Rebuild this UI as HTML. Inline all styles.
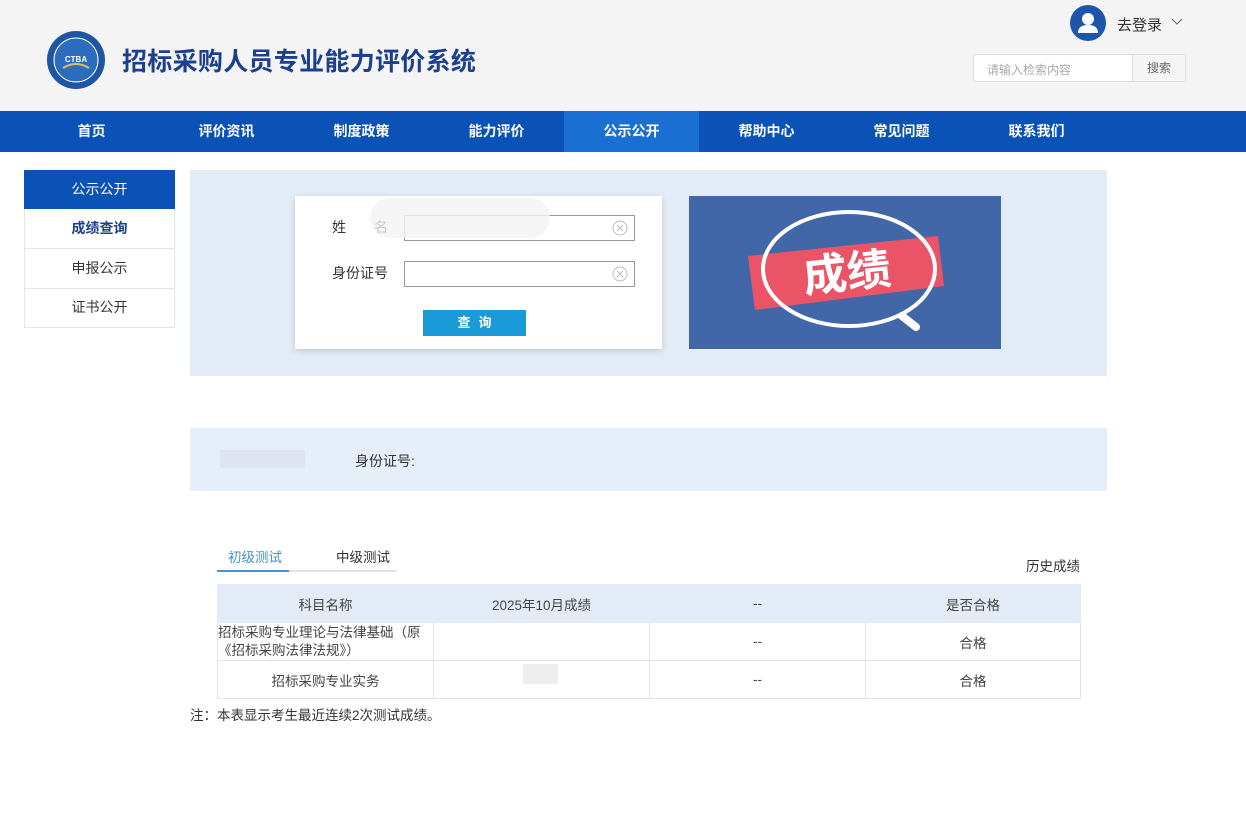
<!DOCTYPE html>
<html><head><meta charset="utf-8"><style>
*{margin:0;padding:0;box-sizing:border-box}
body{width:1246px;height:832px;background:#fff;font-family:"Liberation Sans","Noto Sans CJK SC",sans-serif;font-size:14px;color:#333;position:relative;overflow:hidden}
.abs{position:absolute}
.hdr{left:0;top:0;width:1246px;height:111px;background:#f4f4f5}
.nav{left:0;top:111px;width:1246px;height:41px;background:#0a52b5}
.nav div{position:absolute;top:0;height:41px;line-height:41px;width:135px;text-align:center;color:#fff;font-weight:bold;font-size:14px}
.side div{position:absolute;left:24px;width:151px;height:40px;line-height:39px;text-align:center;border:1px solid #e5e5e5;border-top:none;font-size:14px;color:#333}
td{border:1px solid #e4e4e4;text-align:center;font-size:13.5px;color:#444}
</style></head><body>
<div class="abs hdr"></div>
<svg class="abs" style="left:45px;top:30px" width="62" height="60" viewBox="0 0 62 60">
<circle cx="31" cy="30" r="29" fill="#1f56a3"/>
<circle cx="31" cy="30" r="22" fill="#2d6dbd" stroke="#fff" stroke-width="1"/>
<text x="31" y="32" font-size="8" font-weight="bold" fill="#fff" text-anchor="middle" font-family="Liberation Sans">CTBA</text>
<path d="M18 38 Q31 30 44 38" stroke="#e0c060" stroke-width="2" fill="none"/>
</svg>
<div class="abs" style="left:122px;top:42px;font-size:25px;font-weight:bold;color:#1c3f8e;letter-spacing:0.3px">招标采购人员专业能力评价系统</div>
<svg class="abs" style="left:1070px;top:5px" width="36" height="36" viewBox="0 0 36 36"><circle cx="18" cy="18" r="18" fill="#1e55aa"/><circle cx="18" cy="14" r="6" fill="#fff"/><path d="M8 28 Q8 20 18 20 Q28 20 28 28 Z" fill="#fff"/></svg>
<div class="abs" style="left:1117px;top:14px;font-size:15px;color:#333">去登录</div>
<svg class="abs" style="left:1171px;top:18px" width="12" height="8"><path d="M1 1 L6 6 L11 1" stroke="#666" fill="none"/></svg>
<div class="abs" style="left:973px;top:54px;width:213px;height:28px;border:1px solid #ddd;background:#fff;border-radius:3px"></div>
<div class="abs" style="left:987px;top:61px;font-size:12px;color:#aaa">请输入检索内容</div>
<div class="abs" style="left:1132px;top:55px;width:53px;height:26px;background:#f5f5f5;border-left:1px solid #ddd;font-size:12px;color:#666;text-align:center;line-height:26px">搜索</div>
<div class="abs nav">
<div style="left:24px">首页</div><div style="left:159px">评价资讯</div><div style="left:294px">制度政策</div><div style="left:429px">能力评价</div><div style="left:564px;background:#1a6fd3">公示公开</div><div style="left:699px">帮助中心</div><div style="left:834px">常见问题</div><div style="left:969px">联系我们</div>
</div>
<div class="side">
<div style="top:170px;background:#0a52b5;color:#fff;border:none;height:39px">公示公开</div>
<div style="top:209px;font-weight:bold;color:#1c3f8e">成绩查询</div>
<div style="top:249px">申报公示</div>
<div style="top:288px">证书公开</div>
</div>
<div class="abs" style="left:190px;top:170px;width:917px;height:206px;background:#e3ebf6"></div>
<div class="abs" style="left:295px;top:196px;width:367px;height:153px;background:#fff;box-shadow:0 2px 6px rgba(0,0,0,.15)"></div>
<div class="abs" style="left:332px;top:217px">姓　　名</div>
<div class="abs" style="left:332px;top:263px">身份证号</div>
<div class="abs" style="left:404px;top:215px;width:231px;height:26px;border:1px solid #999;background:#fff"></div>
<div class="abs" style="left:404px;top:261px;width:231px;height:26px;border:1px solid #999;background:#fff"></div>
<div class="abs" style="left:370px;top:198px;width:180px;height:40px;background:#f2f2f2;border-radius:20px;opacity:.8"></div>
<svg class="abs" style="left:612px;top:220px" width="16" height="16"><circle cx="8" cy="8" r="7" fill="none" stroke="#bbb"/><path d="M5 5L11 11M11 5L5 11" stroke="#bbb"/></svg>
<svg class="abs" style="left:612px;top:266px" width="16" height="16"><circle cx="8" cy="8" r="7" fill="none" stroke="#bbb"/><path d="M5 5L11 11M11 5L5 11" stroke="#bbb"/></svg>
<div class="abs" style="left:423px;top:310px;width:103px;height:26px;background:#1a9ad6;color:#fff;font-weight:bold;text-align:center;line-height:26px;letter-spacing:8px;padding-left:8px;font-size:13px">查询</div>
<svg class="abs" style="left:689px;top:196px" width="312" height="153" viewBox="0 0 312 153">
<rect width="312" height="153" fill="#4267a8"/>
<polygon points="59,60 249,40 255,90 66,114" fill="#ea5466"/>
<ellipse cx="160" cy="73" rx="86" ry="57" fill="none" stroke="#fff" stroke-width="4"/>
<path d="M213 120 L227 131" stroke="#fff" stroke-width="8" stroke-linecap="round"/>
<text x="158" y="92" font-size="44" font-weight="bold" fill="#fff" text-anchor="middle" font-family="Noto Sans CJK SC" transform="rotate(-6 158 78)">成绩</text>
</svg>
<div class="abs" style="left:190px;top:428px;width:917px;height:63px;background:#e6eef9"></div>
<div class="abs" style="left:220px;top:450px;width:85px;height:18px;background:#dde4f0"></div>
<div class="abs" style="left:355px;top:451px">身份证号:</div>
<div class="abs" style="left:228px;top:546px;color:#4a90d0;font-size:13.5px">初级测试</div>
<div class="abs" style="left:336px;top:546px;font-size:13.5px">中级测试</div>
<div class="abs" style="left:217px;top:570px;width:180px;height:2px;background:#e4e4e4"></div>
<div class="abs" style="left:217px;top:570px;width:72px;height:2px;background:#4a90d0"></div>
<div class="abs" style="left:1026px;top:555px;font-size:13.5px">历史成绩</div>
<table class="abs" style="left:217px;top:584px;width:864px;border-collapse:collapse">
<tr style="height:38px;background:#e3ebf7"><td style="width:216px;border-color:#e3ebf7">科目名称</td><td style="width:216px;border-color:#e3ebf7">2025年10月成绩</td><td style="width:216px;border-color:#e3ebf7">--</td><td style="border-color:#e3ebf7">是否合格</td></tr>
<tr style="height:38px"><td style="text-align:left;line-height:18px">招标采购专业理论与法律基础（原《招标采购法律法规》）</td><td></td><td>--</td><td>合格</td></tr>
<tr style="height:38px"><td>招标采购专业实务</td><td></td><td>--</td><td>合格</td></tr>
</table>
<div class="abs" style="left:523px;top:664px;width:35px;height:20px;background:#eee"></div>
<div class="abs" style="left:190px;top:704px;font-size:13.5px">注：本表显示考生最近连续2次测试成绩。</div>
</body></html>
